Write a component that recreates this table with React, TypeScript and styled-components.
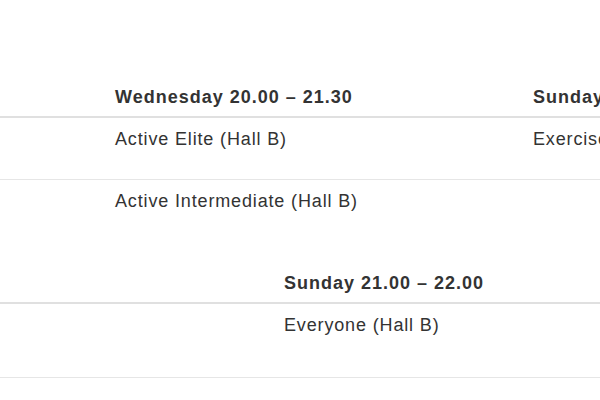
import React from "react";
import styled, { createGlobalStyle } from "styled-components";

const Global = createGlobalStyle`
  html, body { margin: 0; padding: 0; background: #fff; overflow: hidden; }
  body { font-family: "Liberation Sans", Arial, Helvetica, sans-serif; color: #333; }
`;

const Page = styled.div`
  width: 600px;
  height: 400px;
  overflow: hidden;
  padding-top: 78px;
  box-sizing: border-box;
`;

const Table = styled.table<{ $gap?: number }>`
  width: 900px;
  table-layout: fixed;
  border-collapse: collapse;
  border-spacing: 0;
  margin-bottom: ${(p) => p.$gap ?? 0}px;
`;

const Th = styled.th`
  text-align: left;
  font-weight: bold;
  font-size: 18px;
  letter-spacing: 1px;
  line-height: 22px;
  padding: 8px;
  vertical-align: bottom;
  border-bottom: 2px solid #e0e0e0;
  white-space: nowrap;
  overflow: hidden;
`;

const Row = styled.tr<{ $h: number }>`
  height: ${(p) => p.$h}px;
`;

const Td = styled.td`
  font-size: 18px;
  letter-spacing: 0.85px;
  line-height: 22px;
  padding: 10px 8px 6px;
  vertical-align: top;
  border-top: 1px solid #e6e6e6;
  white-space: nowrap;
  overflow: hidden;
`;

const sched1 = [
  { h: 62, cells: ["", "Active Elite (Hall B)", "Exercise (Hall A)"] },
  { h: 38, cells: ["", "Active Intermediate (Hall B)", ""] },
];

const sched2 = [
  { h: 75, cells: ["", "Everyone (Hall B)", ""] },
  { h: 60, cells: ["", "", ""] },
];

export default function App() {
  return (
    <>
      <Global />
      <Page>
        <Table $gap={46}>
          <colgroup>
            <col style={{ width: 107 }} />
            <col style={{ width: 418 }} />
            <col style={{ width: 375 }} />
          </colgroup>
          <thead>
            <tr>
              <Th></Th>
              <Th>Wednesday 20.00 – 21.30</Th>
              <Th>Sunday 20.00 – 21.00</Th>
            </tr>
          </thead>
          <tbody>
            {sched1.map((r, i) => (
              <Row key={i} $h={r.h}>
                {r.cells.map((c, j) => (
                  <Td key={j}>{c}</Td>
                ))}
              </Row>
            ))}
          </tbody>
        </Table>
        <Table>
          <colgroup>
            <col style={{ width: 276 }} />
            <col style={{ width: 418 }} />
            <col style={{ width: 206 }} />
          </colgroup>
          <thead>
            <tr>
              <Th></Th>
              <Th>Sunday 21.00 – 22.00</Th>
              <Th></Th>
            </tr>
          </thead>
          <tbody>
            {sched2.map((r, i) => (
              <Row key={i} $h={r.h}>
                {r.cells.map((c, j) => (
                  <Td key={j}>{c}</Td>
                ))}
              </Row>
            ))}
          </tbody>
        </Table>
      </Page>
    </>
  );
}
